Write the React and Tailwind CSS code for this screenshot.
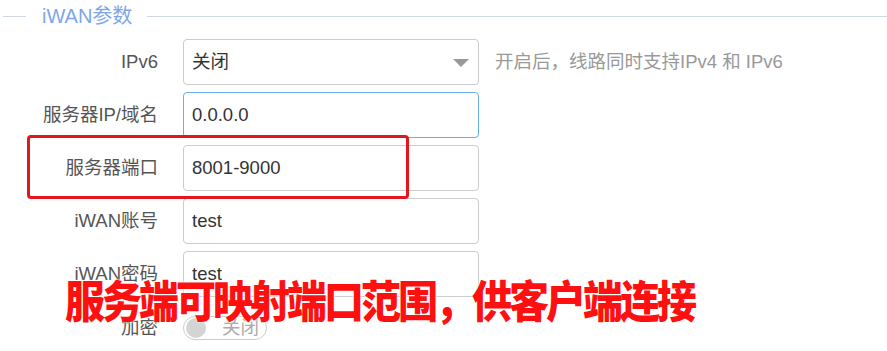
import React from "react";

const font = { fontFamily: '"Liberation Sans", "Noto Sans CJK SC", sans-serif' };

function Row({ label, children, hint }) {
  return (
    <div className="flex items-center h-[46px] mb-[7px]">
      <div className="w-[158px] text-right text-[18.5px] text-[#555]">{label}</div>
      <div className="ml-[25px] w-[296px] h-full">{children}</div>
      {hint && <div className="ml-[16px] text-[18.5px] text-[#999]">{hint}</div>}
    </div>
  );
}

function Input({ value, focus }) {
  return (
    <div
      className={
        focus
          ? "h-full border border-[#66afe9] rounded-[4px] flex items-center px-[8px] text-[18.5px] text-[#333] bg-white"
          : "h-full border border-[#ccc] rounded-[4px] flex items-center px-[8px] text-[18.5px] text-[#333] bg-white"
      }
    >
      {value}
    </div>
  );
}

export default function App() {
  return (
    <div className="relative w-[887px] h-[351px] bg-white overflow-hidden" style={font}>
      {/* legend */}
      <div className="flex items-center h-[32px]">
        <div className="ml-[3px] w-[23px] h-px bg-[#cfd6e6]"></div>
        <div className="ml-[16px] text-[20px] text-[#7ea6e8]">iWAN参数</div>
        <div className="ml-[15px] flex-1 h-px bg-[#cfd6e6]"></div>
      </div>

      <div className="mt-[7px]">
        <Row label="IPv6" hint="开启后，线路同时支持IPv4 和 IPv6">
          <div className="relative h-full border border-[#ccc] rounded-[4px] flex items-center px-[8px] text-[18.5px] text-[#333]">
            关闭
            <div className="absolute right-[9px] top-[19px] w-0 h-0 border-l-[8px] border-r-[8px] border-t-[8px] border-l-transparent border-r-transparent border-t-[#999]"></div>
          </div>
        </Row>
        <Row label="服务器IP/域名">
          <Input value="0.0.0.0" focus />
        </Row>
        <Row label="服务器端口">
          <Input value="8001-9000" />
        </Row>
        <Row label="iWAN账号">
          <Input value="test" />
        </Row>
        <Row label="iWAN密码">
          <Input value="test" />
        </Row>
        <div className="flex items-center h-[24px] mt-[19px]">
          <div className="w-[158px] text-right text-[18.5px] text-[#555]">加密</div>
          <div className="ml-[25px] w-[84px] h-[24px] border border-[#ccc] rounded-full flex items-center px-[2px]">
            <div className="w-[20px] h-[20px] rounded-full bg-[#d4d4d4]"></div>
            <div className="ml-[16px] text-[18.5px] text-[#aaa] leading-none">关闭</div>
          </div>
        </div>
      </div>

      {/* annotation box */}
      <div className="absolute left-[27px] top-[135px] w-[382px] h-[64px] border-[3px] border-[#e5161b] rounded-[4px]"></div>

      {/* annotation text */}
      <div
        className="absolute left-[65px] top-[280px] text-[40px] font-black text-[#ff1010] leading-none whitespace-nowrap tracking-[-3px] origin-top scale-y-[1.12]"
        style={{ textShadow: "0 0 2px #fff, 0 0 2px #fff" }}
      >
        服务端可映射端口范围，供客户端连接
      </div>
    </div>
  );
}
